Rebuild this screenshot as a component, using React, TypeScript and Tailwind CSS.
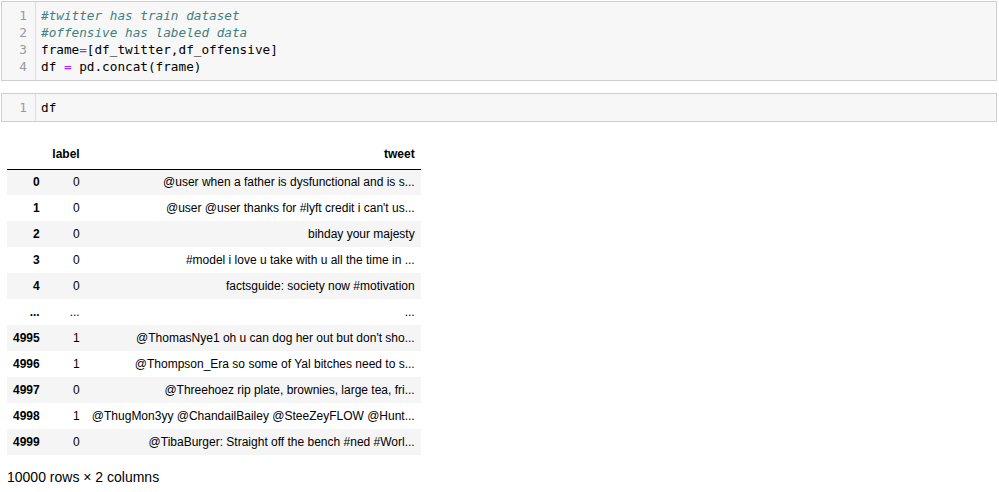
const rows: { idx: string; label: string; tweet: string }[] = [
  { idx: "0", label: "0", tweet: "@user when a father is dysfunctional and is s..." },
  { idx: "1", label: "0", tweet: "@user @user thanks for #lyft credit i can't us..." },
  { idx: "2", label: "0", tweet: "bihday your majesty" },
  { idx: "3", label: "0", tweet: "#model i love u take with u all the time in ..." },
  { idx: "4", label: "0", tweet: "factsguide: society now #motivation" },
  { idx: "...", label: "...", tweet: "..." },
  { idx: "4995", label: "1", tweet: "@ThomasNye1 oh u can dog her out but don't sho..." },
  { idx: "4996", label: "1", tweet: "@Thompson_Era so some of Yal bitches need to s..." },
  { idx: "4997", label: "0", tweet: "@Threehoez rip plate, brownies, large tea, fri..." },
  { idx: "4998", label: "1", tweet: "@ThugMon3yy @ChandailBailey @SteeZeyFLOW @Hunt..." },
  { idx: "4999", label: "0", tweet: "@TibaBurger: Straight off the bench #ned #Worl..." },
]

function CodeCell({ lines }: { lines: React.ReactNode[] }) {
  return (
    <div className="flex border border-[#cfcfcf] bg-[#f7f7f7] font-['DejaVu_Sans_Mono',monospace] text-[12.7px] leading-[17px]">
      <div className="w-[34px] shrink-0 border-r border-[#dddddd] py-[5px] pr-[8px] text-right text-[#999999]">
        {lines.map((_, i) => (
          <div key={i}>{i + 1}</div>
        ))}
      </div>
      <div className="py-[5px] pl-[5px] text-[#000000] whitespace-pre">
        {lines.map((l, i) => (
          <div key={i}>{l}</div>
        ))}
      </div>
    </div>
  )
}

export default function App() {
  const cm = "italic text-[#408080]"
  const op = "text-[#aa22ff]"
  return (
    <div className="w-[999px] h-[492px] bg-white pl-[1px] pr-[2px] pt-[1px]">
      <CodeCell
        lines={[
          <span className={cm}>#twitter has train dataset</span>,
          <span className={cm}>#offensive has labeled data</span>,
          <>frame<span className={op}>=</span>[df_twitter,df_offensive]</>,
          <>df <span className={op}>=</span> pd.concat(frame)</>,
        ]}
      />
      <div className="mt-[12px]">
        <CodeCell lines={[<>df</>]} />
      </div>

      <div className="pl-[6px] pt-[17px] font-['Liberation_Sans',Arial,sans-serif] text-[12px] text-black">
        <table className="border-collapse">
          <thead>
            <tr className="h-[30px] border-b border-black">
              <th className="w-[38px]"></th>
              <th className="w-[40px] px-[6px] text-right font-bold">label</th>
              <th className="w-[335px] px-[6px] text-right font-bold">tweet</th>
            </tr>
          </thead>
          <tbody>
            {rows.map((r, i) => (
              <tr key={r.idx} className={i % 2 === 0 ? "h-[26px] bg-[#f5f5f5]" : "h-[26px] bg-white"}>
                <th className="px-[6px] text-right font-bold">{r.idx}</th>
                <td className="px-[6px] text-right">{r.label}</td>
                <td className="px-[6px] text-right whitespace-nowrap">{r.tweet}</td>
              </tr>
            ))}
          </tbody>
        </table>
        <p className="mt-[12px] text-[14px]">10000 rows × 2 columns</p>
      </div>
    </div>
  )
}
